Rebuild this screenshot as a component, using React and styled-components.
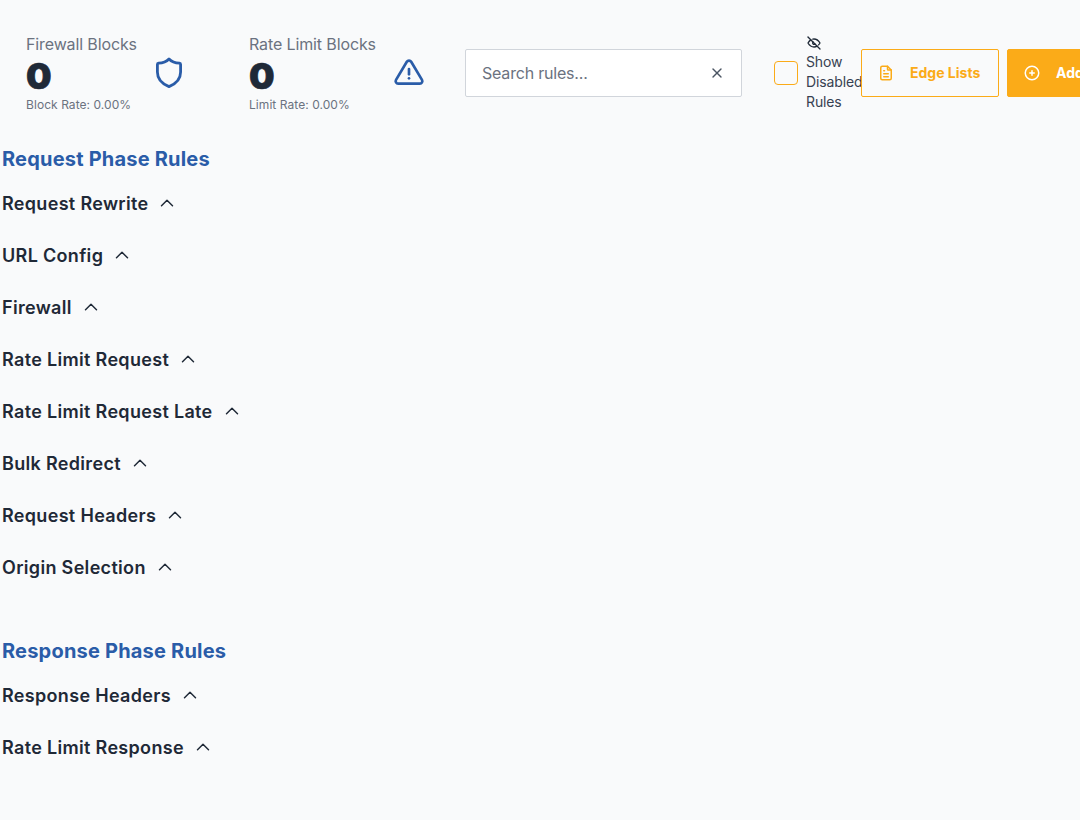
import React from "react";
import styled, { createGlobalStyle } from "styled-components";
import { TbAlertTriangle, TbX, TbEyeOff, TbFileText, TbCirclePlus, TbChevronUp } from "react-icons/tb";

const Global = createGlobalStyle`
  html, body { margin: 0; padding: 0; background: #f9fafb; overflow: hidden; }
  body { font-family: Inter, "Noto Sans", sans-serif; color: #1f2937; width: 1080px; height: 820px; }
`;
const Page = styled.div`width:1080px;height:820px;overflow:hidden;padding-left:2px;box-sizing:border-box;`;
const Toolbar = styled.div`display:flex;align-items:center;height:145px;width:1200px;padding:0 0 0 24px;box-sizing:border-box;`;
const Stat = styled.div`display:flex;align-items:center;justify-content:space-between;width:${p=>p.$w}px;margin-right:${p=>p.$mr}px;color:#2a5ca8;flex:none;`;
const StatText = styled.div`display:flex;flex-direction:column;`;
const StatLabel = styled.div`font-size:16px;line-height:24px;color:#6b7280;letter-spacing:-0.12px;`;
const StatValue = styled.div`font-size:36px;line-height:40px;font-weight:900;color:#1f2937;-webkit-text-stroke:0.6px #1f2937;`;
const StatRate = styled.div`font-size:12px;line-height:18px;color:#6b7280;letter-spacing:0.06px;`;
const Search = styled.div`width:277px;height:48px;box-sizing:border-box;background:#fff;border:1px solid #d1d5db;border-radius:2px;display:flex;align-items:center;justify-content:space-between;padding:0 16px;margin-right:32px;flex:none;color:#4b5563;`;
const Placeholder = styled.span`font-size:16px;color:#6b7280;letter-spacing:-0.2px;`;
const Check = styled.div`width:24px;height:24px;box-sizing:border-box;border:1px solid #fbab18;border-radius:4px;margin-right:8px;flex:none;`;
const Disabled = styled.div`width:55px;flex:none;font-size:14px;line-height:20px;color:#374151;display:flex;flex-direction:column;white-space:nowrap;letter-spacing:-0.12px;padding-top:1px;`;
const EyeRow = styled.div`height:17px;color:#1f2937;`;
const Btn = styled.div`height:48px;box-sizing:border-box;border-radius:2px;border:1px solid #fbab18;display:flex;align-items:center;flex:none;font-size:14px;font-weight:700;padding:0 15px;gap:15px;white-space:nowrap;
  width:${p=>p.$w}px;margin-right:8px;background:${p=>p.$fill?"#fbab18":"transparent"};color:${p=>p.$fill?"#fff":"#fbab18"};`;
const Section = styled.section`margin-bottom:${p=>p.$mb}px;`;
const Phase = styled.h2`margin:0;font-size:20px;line-height:28px;font-weight:700;color:#2a5ca8;padding-bottom:4px;letter-spacing:0.2px;`;
const Row = styled.div`height:52px;display:flex;align-items:center;gap:8px;font-size:18px;font-weight:600;color:#1f2937;letter-spacing:0.32px;`;

const ShieldIcon = () => (
  <svg width="26" height="32" viewBox="0 0 26 32" fill="none" stroke="currentColor" strokeWidth="2.8" strokeLinejoin="round">
    <path d="M13 2C15.5 4.6 19 6 23.4 6.2C24.2 6.3 24.6 6.7 24.6 7.4V15C24.6 22 19.5 27 13 29.6C6.5 27 1.4 22 1.4 15V7.4C1.4 6.7 1.8 6.3 2.6 6.2C7 6 10.5 4.6 13 2Z" />
  </svg>
);

const req=["Request Rewrite","URL Config","Firewall","Rate Limit Request","Rate Limit Request Late","Bulk Redirect","Request Headers","Origin Selection"];
const res=["Response Headers","Rate Limit Response"];

export default function App(){return <Page><Global/>
<Toolbar>
<Stat $w={156} $mr={67}><StatText><StatLabel>Firewall Blocks</StatLabel><StatValue>0</StatValue><StatRate>Block Rate: 0.00%</StatRate></StatText><ShieldIcon/></Stat>
<Stat $w={176} $mr={40}><StatText><StatLabel>Rate Limit Blocks</StatLabel><StatValue>0</StatValue><StatRate>Limit Rate: 0.00%</StatRate></StatText><TbAlertTriangle size={32}/></Stat>
<Search><Placeholder>Search rules...</Placeholder><TbX size={16}/></Search>
<Check/>
<Disabled><EyeRow><TbEyeOff size={16}/></EyeRow><span>Show</span><span>Disabled</span><span>Rules</span></Disabled>
<Btn $w={138}><TbFileText size={18}/>Edge Lists</Btn>
<Btn $w={160} $fill><TbCirclePlus size={18}/>Add Rule</Btn>
</Toolbar>
<Section $mb={44}><Phase>Request Phase Rules</Phase>{req.map(r=><Row key={r}>{r}<TbChevronUp size={22} strokeWidth={1.6}/></Row>)}</Section>
<Section $mb={0}><Phase>Response Phase Rules</Phase>{res.map(r=><Row key={r}>{r}<TbChevronUp size={22} strokeWidth={1.6}/></Row>)}</Section>
</Page>}
